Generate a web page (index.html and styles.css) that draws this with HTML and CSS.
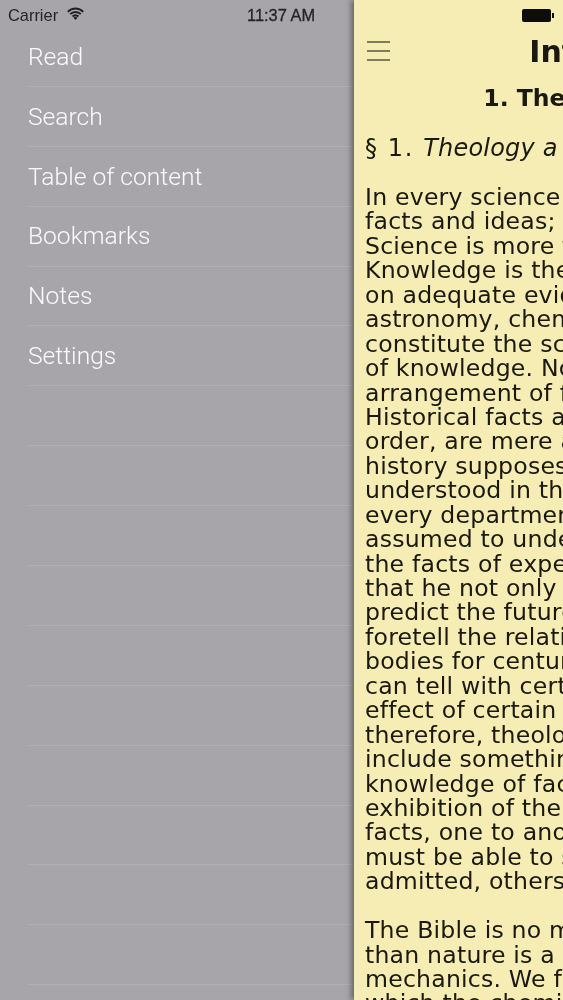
FILE: index.html
```html
<!DOCTYPE html>
<html lang="en">
<head>
<meta charset="utf-8">
<title>Reader</title>
<link rel="stylesheet" href="styles.css">
</head>
<body>
<div class="screen">
  <nav class="menu">
    <div class="row">Read</div>
    <div class="row">Search</div>
    <div class="row">Table of content</div>
    <div class="row">Bookmarks</div>
    <div class="row">Notes</div>
    <div class="row">Settings</div>
    <div class="row"></div>
    <div class="row"></div>
    <div class="row"></div>
    <div class="row"></div>
    <div class="row"></div>
    <div class="row"></div>
    <div class="row"></div>
    <div class="row"></div>
    <div class="row"></div>
    <div class="row"></div>
    <div class="row"></div>
  </nav>
  <main class="page">
    <svg class="burger" width="23" height="20" viewBox="0 0 23 20"><path d="M0 1h23M0 10h23M0 19h23" stroke="#0f0e06" stroke-width="1.2" fill="none"/></svg>
    <h1 class="title">Introduction</h1>
    <h2 class="chapter">1. Theology a Science</h2>
    <p class="section">§ 1. <em class="section-name">Theology a Science.</em></p>
    <div class="body-text">
      <p>In every science there are two factors:<br>facts and ideas; or, facts and the mind.<br>Science is more than knowledge.<br>Knowledge is the persuasion of what is true<br>on adequate evidence. But facts of<br>astronomy, chemistry, or history do not<br>constitute the science of those departments<br>of knowledge. Nor does the mere orderly<br>arrangement of facts amount to science.<br>Historical facts arranged in chronological<br>order, are mere annals. The philosophy of<br>history supposes those facts to be<br>understood in their causal relations. In<br>every department the man of science is<br>assumed to understand the laws by which<br>the facts of experience are determined; so<br>that he not only knows the past, but can<br>predict the future. The astronomer can<br>foretell the relative position of the heavenly<br>bodies for centuries to come. The chemist<br>can tell with certainty what will be the<br>effect of certain chemical combinations. If,<br>therefore, theology be a science, it must<br>include something more than a mere<br>knowledge of facts. It must embrace an<br>exhibition of the internal relation of those<br>facts, one to another, and each to all. It<br>must be able to show that if one be<br>admitted, others cannot be denied.</p>
      <p>The Bible is no more a system of theology,<br>than nature is a system of chemistry or of<br>mechanics. We find in nature the facts<br>which the chemist or the mechanical</p>
    </div>
  </main>
  <header class="status">
    <span class="carrier">Carrier</span>
    <svg class="wifi" width="17" height="13" viewBox="0 0 17 13"><path d="M0.8 4.8a10.8 10.8 0 0 1 15.4 0M3.2 7.2a7.4 7.4 0 0 1 10.6 0M5.5 9.5a4.1 4.1 0 0 1 6 0" stroke="#1f1f21" stroke-width="1.9" fill="none"/><path d="M8.5 13l-2-2.3a2.8 2.8 0 0 1 4 0z" fill="#1f1f21"/></svg>
    <span class="time">11:37 AM</span>
    <span class="battery"><span class="cell"></span><span class="nub"></span></span>
  </header>
</div>
</body>
</html>
```

FILE: styles.css
```css
* { box-sizing: border-box; }
html, body { margin: 0; padding: 0; }
body { width: 563px; height: 1000px; overflow: hidden; background: #a7a5a9; }
.screen {
  position: relative;
  display: flex;
  width: 563px;
  height: 1000px;
  overflow: hidden;
  filter: blur(0.45px);
}
.menu {
  flex: none;
  width: 354px;
  padding: 27px 0 0 28px;
  background: #a7a5a9;
}
.row {
  height: 59.9px;
  padding-top: 14.8px;
  border-bottom: 1px solid #b1afb4;
  font: 300 24.6px/30px Roboto, "Liberation Sans", sans-serif;
  color: #fbfafc;
}
.page {
  flex: none;
  width: 563px;
  height: 1000px;
  padding-top: 35px;
  background: #f5edb3;
  box-shadow: -3px 0 5px rgba(60, 55, 60, 0.55);
  color: #1a1810;
  font-family: "DejaVu Sans", Verdana, sans-serif;
}
.burger {
  position: absolute;
  left: 367px;
  top: 41px;
}
.title {
  margin: 0;
  height: 34px;
  padding-right: 3px;
  font-size: 30px;
  font-weight: 700;
  line-height: 34px;
  text-align: center;
  white-space: nowrap;
}
.chapter {
  margin: 14px 0 0;
  height: 30px;
  padding-right: 16px;
  font-size: 23.5px;
  font-weight: 700;
  line-height: 30px;
  text-align: center;
  white-space: nowrap;
}
.section {
  margin: 20px 0 0 11px;
  height: 30px;
  font-size: 24px;
  letter-spacing: 1.6px;
  line-height: 30px;
  white-space: nowrap;
}
.section-name { letter-spacing: 0.2px; }
.body-text {
  margin: 22px 0 0 11px;
  font-size: 23.6px;
  letter-spacing: 0.2px;
  line-height: 24.43px;
  white-space: nowrap;
}
.body-text p { margin: 0 0 24.43px; }
.status {
  position: absolute;
  left: 0;
  top: 0;
  width: 563px;
  height: 30px;
  color: #242426;
  font: 16.4px/30px "Liberation Sans", Arial, sans-serif;
}
.carrier { position: absolute; left: 8px; top: 0; }
.wifi { position: absolute; left: 67px; top: 7px; }
.time { position: absolute; left: 247px; top: 0; -webkit-text-stroke: 0.3px #242426; }
.battery { position: absolute; left: 522px; top: 9px; display: flex; align-items: center; }
.cell { width: 29px; height: 13px; border-radius: 2px; background: #0d0d0a; }
.nub { width: 2px; height: 5px; margin-left: 1px; background: #0d0d0a; }
```
